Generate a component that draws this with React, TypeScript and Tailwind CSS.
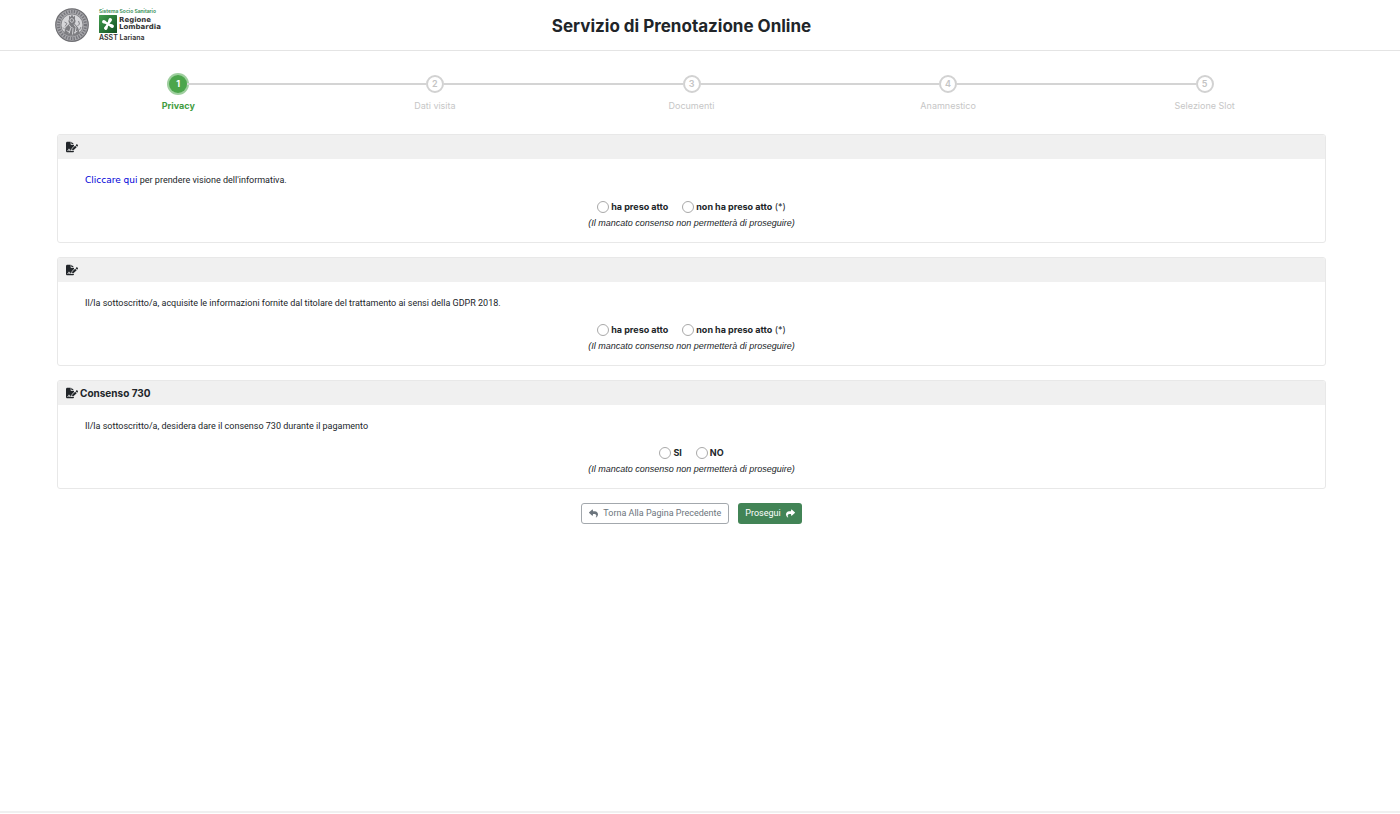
import type { ReactNode } from "react";
import { FaFileSignature, FaReply, FaShare } from "react-icons/fa6";

const steps = ["Privacy", "Dati visita", "Documenti", "Anamnestico", "Selezione Slot"];

function Seal() {
  return (
    <svg viewBox="0 0 68 68" className="size-[34px]" role="img" aria-label="Stemma">
      <circle cx="34" cy="34" r="32.5" fill="#a8a8ac" stroke="#707074" strokeWidth="2.5" />
      <circle cx="34" cy="34" r="27" fill="none" stroke="#74747a" strokeWidth="6" strokeDasharray="2.6 2.6" />
      <circle cx="34" cy="34" r="22" fill="#d6d6d9" stroke="#707074" strokeWidth="1.5" />
      <path d="M28 15l3 3 3-5 3 5 3-3v8c2 3 1 6-1 8l7 8 4 12c-9 6-22 6-32 0l3-12 8-8c-2-3-3-5-1-8z" fill="#7d7d81" />
      <path d="M31 22c3-2 6 0 6 3s-4 5-6 2 0-4 0-5zM28 33l4 6-4 12M38 33l4 6-2 12M33 38l3 3-1 12M23 45l7 4M45 46l-7 4" fill="none" stroke="#d8d8db" strokeWidth="1.8" />
      <path d="M19 28l5 3-4 6M47 26l2 6-4 4M16 39l4 4M52 38l-3 6" fill="none" stroke="#85858a" strokeWidth="2" />
    </svg>
  );
}

function RegioneLogo() {
  return (
    <div className="flex flex-col gap-px font-semibold text-[#333]">
      <span className="text-[5px] leading-[6px] whitespace-nowrap text-[#2f8a50]">Sistema Socio Sanitario</span>
      <div className="flex items-center gap-[2px]">
        <svg viewBox="0 0 36 36" className="size-[18px] shrink-0" role="img" aria-label="Rosa camuna">
          <defs>
            <linearGradient id="rosa" x1="0" y1="0" x2="1" y2="1">
              <stop offset="0" stopColor="#43a04e" />
              <stop offset="1" stopColor="#124f23" />
            </linearGradient>
          </defs>
          <rect width="36" height="36" rx="1" fill="url(#rosa)" />
          <g fill="#fff" transform="rotate(28 18 18)">
            <path d="M16.500 18C16 14 14.500 11 14.500 8.500a3.500 3.500 0 0 1 7 0C21.500 11 20 14 19.500 18z" />
            <path d="M16.500 18C16 22 14.500 25 14.500 27.500a3.500 3.500 0 0 0 7 0C21.500 25 20 22 19.500 18z" />
            <path d="M18 16.500C14 16 11 14.500 8.500 14.500a3.500 3.500 0 0 0 0 7C11 21.500 14 20 18 19.500z" />
            <path d="M18 16.500C22 16 25 14.500 27.500 14.500a3.500 3.500 0 0 1 0 7C25 21.500 22 20 18 19.500z" />
            <circle cx="18" cy="18" r="3.200" />
          </g>
        </svg>
        <span className="flex flex-col font-['DejaVu_Sans',sans-serif] text-[7px] leading-[7px] font-bold">
          <span>Regione</span>
          <span>Lombardia</span>
        </span>
      </div>
      <span className="text-[7px] leading-[8px] whitespace-nowrap">ASST Lariana</span>
    </div>
  );
}

function Stepper() {
  return (
    <ol className="-mx-[7px] grid grid-cols-5">
      {steps.map((label, i) => (
        <li key={label} className="flex flex-col items-center gap-[6px]" aria-current={i === 0 ? "step" : undefined}>
          <div className="flex h-5 w-full items-center">
            <span className={i === 0 ? "flex-1" : "h-[2px] flex-1 bg-[#d4d4d4]"} />
            <span
              className={
                i === 0
                  ? "flex size-[18px] items-center justify-center rounded-full bg-[#4ca64c] text-[9px] font-bold text-white shadow-[0_0_0_2px_#9fcf9f]"
                  : "flex size-[18px] items-center justify-center rounded-full border-2 border-[#d2d2d2] bg-white text-[9px] font-semibold text-[#c4c4c4]"
              }
            >
              {i + 1}
            </span>
            <span className={i === steps.length - 1 ? "flex-1" : "h-[2px] flex-1 bg-[#d4d4d4]"} />
          </div>
          <span
            className={
              i === 0
                ? "text-[9px] leading-[11px] font-bold text-[#3f9d3f]"
                : "text-[9px] leading-[11px] text-[#c6c6c6]"
            }
          >
            {label}
          </span>
        </li>
      ))}
    </ol>
  );
}

type CardProps = {
  name: string;
  title?: string;
  options: [string, string];
  required?: boolean;
  children: ReactNode;
};

function ConsentCard({ name, title, options, required, children }: CardProps) {
  return (
    <section className="overflow-hidden rounded-[3px] border border-[#e8e8e8]">
      <h2 className="flex h-6 items-center gap-[2px] bg-[#f0f0f0] px-[8px] text-[10px] font-bold">
        <FaFileSignature className="size-3" />
        {title}
      </h2>
      <div className="flex flex-col px-[27px] pt-[14px] pb-[11px]">
        <p className="font-['Roboto',sans-serif] text-[9px] leading-[14px]">{children}</p>
        <fieldset className="mt-[12px] flex flex-col items-center">
          <div className="flex h-4 items-center gap-[14px] text-[9px] font-bold">
            {options.map((option) => (
              <label key={option} className="flex items-center gap-[2px]">
                <input
                  type="radio"
                  name={name}
                  className="size-3 appearance-none rounded-full border border-[#a9a9a9] bg-white checked:border-4 checked:border-[#428456]"
                />
                <span>
                  {option}
                  {required && option === options[1] && <span className="font-normal"> (*)</span>}
                </span>
              </label>
            ))}
          </div>
          <em className="font-['Liberation_Sans',sans-serif] text-[9px] leading-[16px]">
            (Il mancato consenso non permetterà di proseguire)
          </em>
        </fieldset>
      </div>
    </section>
  );
}

export default function App() {
  return (
    <div className="flex min-h-screen flex-col bg-white font-['Inter','Liberation_Sans',sans-serif] text-[#212529]">
      <header className="grid grid-cols-[1fr_auto_1fr] items-center border-b border-[#e4e4e4] pr-[92px] pl-[55px]">
        <div className="flex h-[50px] items-center gap-[10px]">
          <Seal />
          <RegioneLogo />
        </div>
        <h1 className="pt-[3px] text-[17px] font-bold">Servizio di Prenotazione Online</h1>
      </header>

      <main className="flex flex-1 flex-col gap-[14px] pt-[23px] pr-[74px] pl-[57px]">
        <div className="pb-[9px]">
          <Stepper />
        </div>
        <ConsentCard name="informativa" options={["ha preso atto", "non ha preso atto"]} required>
          <a href="#informativa" className="font-['DejaVu_Sans',sans-serif] leading-none text-[#0000d8]">
            Cliccare qui
          </a>{" "}
          per prendere visione dell'informativa.
        </ConsentCard>
        <ConsentCard name="gdpr" options={["ha preso atto", "non ha preso atto"]} required>
          Il/la sottoscritto/a, acquisite le informazioni fornite dal titolare del trattamento ai sensi della GDPR 2018.
        </ConsentCard>
        <ConsentCard name="consenso730" title="Consenso 730" options={["SI", "NO"]}>
          Il/la sottoscritto/a, desidera dare il consenso 730 durante il pagamento
        </ConsentCard>
        <div className="flex justify-center gap-[9px] font-['Roboto',sans-serif] text-[9px]">
          <button
            type="button"
            className="flex h-[21px] items-center gap-[5px] rounded-[3px] border border-[#a3a8ad] bg-white px-[7px] text-[#6c757d]"
          >
            <FaReply className="size-[9px]" />
            Torna Alla Pagina Precedente
          </button>
          <button
            type="button"
            className="flex h-[21px] items-center gap-[5px] rounded-[3px] bg-[#428456] px-[7px] text-white"
          >
            Prosegui
            <FaShare className="size-[9px]" />
          </button>
        </div>
      </main>

      <footer className="h-[3px] border-t-2 border-[#f0f0f0]" />
    </div>
  );
}
